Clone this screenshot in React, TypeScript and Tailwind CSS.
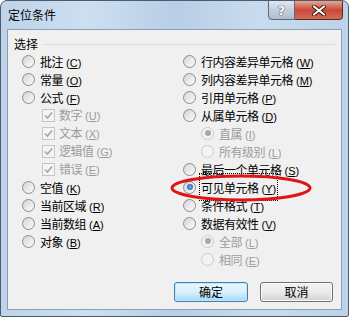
import React from "react";

const cjk = { fontFamily: '"Noto Sans CJK SC", "Noto Sans", sans-serif' };

function Radio({ checked, disabled }: { checked?: boolean; disabled?: boolean }) {
  return (
    <span
      className={`w-[13px] h-[13px] rounded-full border flex items-center justify-center shrink-0 ${
        disabled
          ? "border-[#c9cacb] bg-[#f3f3f3]"
          : "border-[#8b8c8d] bg-linear-to-br from-[#d4d4d4] to-[#fdfdfd]"
      }`}
    >
      {checked && (
        <span
          className={`w-[6px] h-[6px] rounded-full ${
            disabled ? "bg-[#a9a9a9]" : "bg-radial from-[#6fb3ee] to-[#114f9c]"
          }`}
        />
      )}
    </span>
  );
}

function Check() {
  return (
    <span className="w-[13px] h-[13px] border border-[#c5c5c5] bg-[#f4f4f4] flex items-center justify-center shrink-0">
      <svg width="9" height="9" viewBox="0 0 9 9">
        <path d="M1 4.5 L3.5 7 L8 1.5" fill="none" stroke="#a6a6a6" strokeWidth="1.6" />
      </svg>
    </span>
  );
}

function Label({ text, k, disabled }: { text: string; k: string; disabled?: boolean }) {
  return (
    <span className={`text-[12px] leading-none whitespace-nowrap ${disabled ? "text-[#9c9c9c]" : "text-black"}`}>
      <span className="tracking-[-0.5px]" style={cjk}>{text}</span>
      <span className="ml-[3px] text-[11px]" style={{ fontFamily: '"Liberation Sans", sans-serif' }}>
        (<span className="underline">{k}</span>)
      </span>
    </span>
  );
}

type Row = { text: string; k: string; kind: "radio" | "check" | "sub"; checked?: boolean; disabled?: boolean; focus?: boolean };

const left: Row[] = [
  { text: "批注", k: "C", kind: "radio" },
  { text: "常量", k: "O", kind: "radio" },
  { text: "公式", k: "F", kind: "radio" },
  { text: "数字", k: "U", kind: "check", disabled: true },
  { text: "文本", k: "X", kind: "check", disabled: true },
  { text: "逻辑值", k: "G", kind: "check", disabled: true },
  { text: "错误", k: "E", kind: "check", disabled: true },
  { text: "空值", k: "K", kind: "radio" },
  { text: "当前区域", k: "R", kind: "radio" },
  { text: "当前数组", k: "A", kind: "radio" },
  { text: "对象", k: "B", kind: "radio" },
];

const right: Row[] = [
  { text: "行内容差异单元格", k: "W", kind: "radio" },
  { text: "列内容差异单元格", k: "M", kind: "radio" },
  { text: "引用单元格", k: "P", kind: "radio" },
  { text: "从属单元格", k: "D", kind: "radio" },
  { text: "直属", k: "I", kind: "sub", checked: true, disabled: true },
  { text: "所有级别", k: "L", kind: "sub", disabled: true },
  { text: "最后一个单元格", k: "S", kind: "radio" },
  { text: "可见单元格", k: "Y", kind: "radio", checked: true, focus: true },
  { text: "条件格式", k: "T", kind: "radio" },
  { text: "数据有效性", k: "V", kind: "radio" },
  { text: "全部", k: "L", kind: "sub", checked: true, disabled: true },
  { text: "相同", k: "E", kind: "sub", disabled: true },
];

function Item({ r }: { r: Row }) {
  if (r.kind === "check") {
    return (
      <div className="h-[18px] flex items-center gap-[4px] ml-[20px]">
        <Check />
        <Label text={r.text} k={r.k} disabled />
      </div>
    );
  }
  return (
    <div className={`h-[18px] flex items-center gap-[5px] ${r.kind === "sub" ? "ml-[18px]" : ""}`}>
      <Radio checked={r.checked} disabled={r.disabled} />
      <span className={r.focus ? "outline outline-dotted outline-1 outline-black px-[1px] -ml-[1px] py-[1px]" : ""}>
        <Label text={r.text} k={r.k} disabled={r.disabled} />
      </span>
    </div>
  );
}

export default function App() {
  return (
    <div className="relative w-[350px] h-[318px] bg-white">
      <div className="w-[349px] h-[317px] border border-[#4d5b6b] rounded-t-[7px] rounded-b-[2px] bg-[linear-gradient(90deg,#bed3e9_0%,#cddff1_25%,#b8cee6_50%,#c9dbee_75%,#bdd2e9_100%)] flex flex-col overflow-hidden">
        <div className="h-[28px] flex items-center pl-[7px] relative">
          <span className="text-[12px] text-black" style={cjk}>定位条件</span>
          <div className="absolute top-[-1px] right-[5px] flex">
            <div className="w-[27px] h-[20px] border border-[#5a6a7c] rounded-bl-[4px] bg-linear-to-b from-[#dfe7f1] via-[#c2cfdd] to-[#aebdcd] flex items-center justify-center">
              <span className="text-white font-bold text-[13px] leading-none [text-shadow:0_0_1px_#333,0_0_1px_#333]" style={{ fontFamily: '"DejaVu Sans", sans-serif' }}>?</span>
            </div>
            <div className="w-[48px] h-[20px] border border-l-0 border-[#5a2a22] rounded-br-[4px] bg-linear-to-b from-[#e5a596] via-[#c8483a] to-[#d56b52] flex items-center justify-center">
              <svg width="14" height="11" viewBox="0 0 14 11">
                <path d="M2 1.5 L12 9.5 M12 1.5 L2 9.5" stroke="#3a1510" strokeWidth="4" strokeLinecap="round" />
                <path d="M2 1.5 L12 9.5 M12 1.5 L2 9.5" stroke="#ffffff" strokeWidth="2.2" strokeLinecap="round" />
              </svg>
            </div>
          </div>
        </div>
        <div className="mx-[6px] h-[281px] border border-[#8aa0b6] bg-[#f0f0f0] flex flex-col">
          <div className="mt-[5px] h-[17px] flex items-center pl-[6px] pr-[6px] gap-[5px]">
            <span className="text-[12px] text-black" style={cjk}>选择</span>
            <div className="flex-1 h-px bg-[#d5dbe1] mt-[2px]" />
          </div>
          <div className="grid grid-cols-[161px_1fr] pl-[14px]">
            <div className="flex flex-col">
              {left.map((r) => (
                <Item key={r.text} r={r} />
              ))}
            </div>
            <div className="flex flex-col">
              {right.map((r) => (
                <Item key={r.text} r={r} />
              ))}
            </div>
          </div>
          <div className="mt-auto mb-[7px] flex justify-end gap-[12px] pr-[8px]">
            <button className="w-[74px] h-[20px] rounded-[3px] border border-[#3c7fb1] bg-linear-to-b from-[#eaf6fd] via-[#d9f0fc] to-[#a7d9f5] shadow-[inset_0_0_0_1px_#c3e7fa] text-[12px] text-black flex items-center justify-center" style={cjk}>
              确定
            </button>
            <button className="w-[73px] h-[20px] rounded-[3px] border border-[#707070] bg-linear-to-b from-[#f2f2f2] via-[#ebebeb] to-[#d2d2d2] shadow-[inset_0_0_0_1px_#fcfcfc] text-[12px] text-black flex items-center justify-center" style={cjk}>
              取消
            </button>
          </div>
        </div>
      </div>
      <svg className="absolute inset-0 pointer-events-none" width="350" height="318">
        <ellipse cx="241" cy="188" rx="69" ry="12" fill="none" stroke="#e01414" strokeWidth="3" />
      </svg>
    </div>
  );
}
